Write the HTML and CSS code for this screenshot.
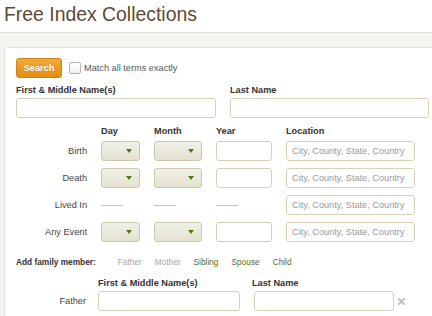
FILE: index.html
```html
<!DOCTYPE html>
<html lang="en">
<head>
  <meta charset="UTF-8" />
  <title>Free Index Collections</title>
  <link rel="stylesheet" href="styles.css">
</head>
<body>
  <h1 class="page-title">Free Index Collections</h1>

  <div class="band">
    <div class="panel">
      <!-- Search + exact match -->
      <div class="search-row">
        <button class="search-btn">Search</button>
        <label class="exact"><span class="checkbox"></span>Match all terms exactly</label>
      </div>

      <!-- Names -->
      <div class="name-row">
        <div class="field">
          <label class="field-label">First &amp; Middle Name(s)</label>
          <input class="text-input" type="text">
        </div>
        <div class="field">
          <label class="field-label">Last Name</label>
          <input class="text-input" type="text">
        </div>
      </div>

      <!-- Life events -->
      <div class="events">
        <span></span>
        <span class="col-head">Day</span>
        <span class="col-head">Month</span>
        <span class="col-head">Year</span>
        <span class="col-head">Location</span>

        <span class="row-label">Birth</span>
        <div class="select"><span class="arrow"></span></div>
        <div class="select"><span class="arrow"></span></div>
        <input class="text-input" type="text">
        <input class="text-input" type="text" placeholder="City, County, State, Country">

        <span class="row-label">Death</span>
        <div class="select"><span class="arrow"></span></div>
        <div class="select"><span class="arrow"></span></div>
        <input class="text-input" type="text">
        <input class="text-input" type="text" placeholder="City, County, State, Country">

        <span class="row-label">Lived In</span>
        <span class="dash"></span>
        <span class="dash"></span>
        <span class="dash"></span>
        <input class="text-input" type="text" placeholder="City, County, State, Country">

        <span class="row-label">Any Event</span>
        <div class="select"><span class="arrow"></span></div>
        <div class="select"><span class="arrow"></span></div>
        <input class="text-input" type="text">
        <input class="text-input" type="text" placeholder="City, County, State, Country">
      </div>

      <!-- Family -->
      <div class="family-add">
        <span class="family-title">Add family member:</span>
        <span class="rel off">Father</span>
        <span class="rel off">Mother</span>
        <span class="rel">Sibling</span>
        <span class="rel">Spouse</span>
        <span class="rel">Child</span>
      </div>

      <div class="family">
        <span></span>
        <span class="field-label">First &amp; Middle Name(s)</span>
        <span class="field-label">Last Name</span>
        <span></span>

        <span class="row-label">Father</span>
        <input class="text-input" type="text">
        <input class="text-input" type="text">
        <svg class="remove" width="7" height="7" viewBox="0 0 7 7">
          <path d="M1 1L6 6M6 1L1 6" stroke="#bdbdbd" stroke-width="1.8" stroke-linecap="round"/>
        </svg>
      </div>
    </div>
  </div>
</body>
</html>
```

FILE: styles.css
```css
/* ---------------- Free Index search form ---------------- */
:root {
  --title: #5b4a36;
  --text: #333;
  --muted: #555;
  --light: #a8a8a8;
  --olive: #5f6b1c;
  --tan: #d9d2b9;
  --band: #f5f4ef;
}

* {
  margin: 0;
  padding: 0;
  box-sizing: border-box;
}

body {
  font-family: "Liberation Sans", Arial, sans-serif;
  font-size: 9.2px;
  color: var(--text);
  background: #fff;
  overflow: hidden;
}

.page-title {
  font-size: 19.4px;
  font-weight: normal;
  line-height: 22px;
  color: var(--title);
  padding: 3px 0 0 4px;
  margin-bottom: 7px;
}

.band {
  background: var(--band);
  border-top: 1px solid #e2e0d7;
  padding: 14px 0 0 4px;
  overflow: hidden;
}

.panel {
  background: #fff;
  border: 1px solid #e3e1d9;
  border-radius: 4px 0 0 0;
  margin-right: -10px;
  padding: 10px 0 20px 11px;
}

/* Search row */
.search-row {
  display: flex;
  align-items: center;
  gap: 7px;
  margin-bottom: 6px;
}

.search-btn {
  width: 46px;
  height: 20px;
  border: 1px solid #cf8215;
  border-radius: 3px;
  background: linear-gradient(#f2a93a, #e38c12);
  color: #fff;
  font-family: inherit;
  font-size: 9.2px;
  font-weight: bold;
  text-shadow: 0 0 1px rgba(150, 80, 0, 0.4);
}

.exact {
  display: flex;
  align-items: center;
  gap: 3px;
  color: var(--muted);
}

.checkbox {
  width: 12px;
  height: 12px;
  border: 1px solid #b4b4b4;
  border-radius: 2px;
  background: linear-gradient(#fff, #f2f2f2);
}

/* Name fields */
.name-row {
  display: grid;
  grid-template-columns: 200px 199px;
  column-gap: 14px;
}

.field-label {
  display: block;
  font-weight: bold;
  line-height: 13px;
  margin-bottom: 1px;
}

.text-input {
  display: block;
  width: 100%;
  height: 20px;
  border: 1px solid var(--tan);
  border-radius: 3px;
  background: #fff;
  padding: 0 5px;
  font-family: inherit;
  font-size: 9.2px;
  color: var(--text);
  outline: none;
}

.text-input::placeholder {
  color: #9a9a9a;
}

/* Events grid */
.events {
  display: grid;
  grid-template-columns: 71px 39px 48px 56px 129px;
  grid-template-rows: 9px repeat(4, 20px);
  column-gap: 14px;
  row-gap: 7px;
  margin-top: 7px;
  align-items: center;
}

.events .col-head {
  font-weight: bold;
  line-height: 13px;
  align-self: start;
}

.row-label {
  text-align: right;
  color: #444;
}

.select {
  height: 20px;
  border: 1px solid #cdc7ad;
  border-radius: 3px;
  background: linear-gradient(#f2f1e8, #e3e1d0);
  display: flex;
  align-items: center;
  justify-content: flex-end;
  padding-right: 7px;
}

.arrow {
  width: 0;
  height: 0;
  border-top: 4px solid #4f7a10;
  border-left: 3px solid transparent;
  border-right: 3px solid transparent;
}

.dash {
  width: 22px;
  height: 1px;
  background: #c6c6c6;
}

/* Family */
.family-add {
  display: flex;
  gap: 13px;
  font-size: 8.3px;
  line-height: 13px;
  margin-top: 14px;
}

.family-title {
  font-weight: bold;
  margin-right: 9px;
}

.rel {
  color: var(--olive);
}

.rel.off {
  color: var(--light);
}

.family {
  display: grid;
  grid-template-columns: 70px 142px 140px 7px;
  column-gap: 12px;
  margin-top: 8px;
  align-items: center;
}

.family .field-label {
  margin-bottom: 1px;
  align-self: end;
}

.family .text-input:last-of-type {
  margin-left: 2px;
}

.family .remove {
  margin-left: -6px;
}
```
